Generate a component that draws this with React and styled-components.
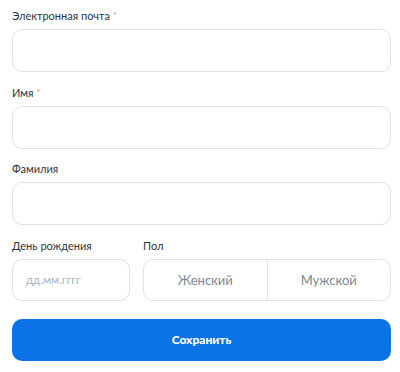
import React from "react";
import styled, { createGlobalStyle } from "styled-components";

const GlobalStyle = createGlobalStyle`
  body {
    margin: 0;
    background: #ffffff;
    font-family: "Lato", "Inter", sans-serif;
  }
`;

const Form = styled.form`
  display: flex;
  flex-direction: column;
  gap: 13.5px;
  padding: 9px 9px 0 12px;
`;

const Field = styled.div`
  display: flex;
  flex-direction: column;
  gap: 6px;
`;

const Label = styled.label`
  font-size: 11px;
  line-height: 14px;
  color: #30343a;
  height: 14px;
`;

const Required = styled.span`
  color: #f08a8a;
  font-size: 9px;
  vertical-align: top;
  margin-left: 3px;
`;

const Input = styled.input`
  box-sizing: border-box;
  height: ${({ $h }) => $h || 43}px;
  width: 100%;
  border: 1px solid #dde1e6;
  border-radius: 10px;
  padding: 0 13px;
  font-family: inherit;
  font-size: 11.5px;
  outline: none;
  &::placeholder {
    color: #a8b3c6;
  }
`;

const Row = styled.div`
  display: grid;
  grid-template-columns: 118px 1fr;
  gap: 13px;
`;

const Segments = styled.div`
  display: flex;
  height: 42px;
  border: 1px solid #dde1e6;
  border-radius: 10px;
  box-sizing: border-box;
  overflow: hidden;
`;

const Segment = styled.button`
  flex: 1;
  border: none;
  background: transparent;
  font-family: inherit;
  font-size: 13px;
  color: #7d8694;
  & + & {
    border-left: 1px solid #dde1e6;
  }
`;

const Submit = styled.button`
  margin-top: 4.5px;
  height: 42px;
  border: none;
  border-radius: 10px;
  background: #0a74e6;
  color: #ffffff;
  font-family: inherit;
  font-weight: 900;
  font-size: 12px;
`;

export default function App() {
  return (
    <>
      <GlobalStyle />
      <Form onSubmit={(e) => e.preventDefault()}>
        <Field>
          <Label>
            Электронная почта<Required>*</Required>
          </Label>
          <Input type="email" />
        </Field>
        <Field>
          <Label>
            Имя<Required>*</Required>
          </Label>
          <Input />
        </Field>
        <Field>
          <Label>Фамилия</Label>
          <Input />
        </Field>
        <Row>
          <Field>
            <Label>День рождения</Label>
            <Input placeholder="дд.мм.гггг" $h={42} />
          </Field>
          <Field>
            <Label>Пол</Label>
            <Segments>
              <Segment type="button">Женский</Segment>
              <Segment type="button">Мужской</Segment>
            </Segments>
          </Field>
        </Row>
        <Submit type="submit">Сохранить</Submit>
      </Form>
    </>
  );
}
